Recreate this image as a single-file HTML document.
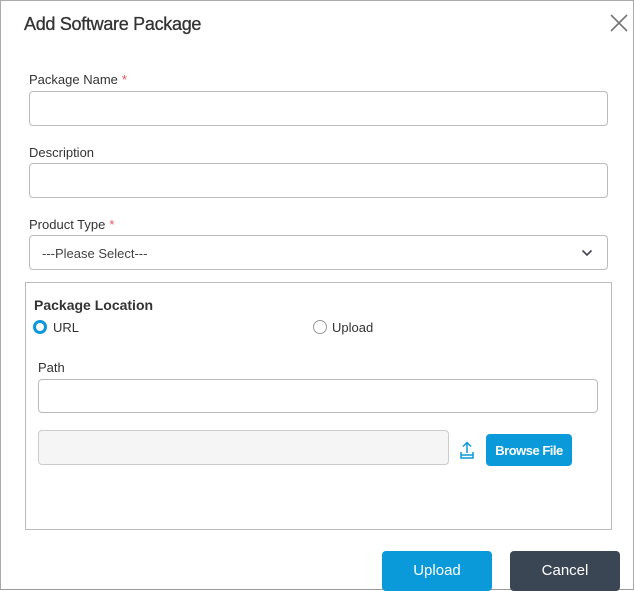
<!DOCTYPE html>
<html><head><meta charset="utf-8"><style>
*{box-sizing:border-box;margin:0;padding:0}
body{width:634px;height:590px;overflow:hidden;background:#fff;font-family:"Liberation Sans",sans-serif;color:#333;position:relative}
.frame{position:absolute;left:0;top:0;width:634px;height:590px;border:1px solid #aaa;border-bottom:1px solid #999}
.a{position:absolute}
.lbl{font-size:13px;color:#333}
.inp{position:absolute;border:1px solid #bbb;border-radius:4px;background:#fff}
.req{color:#e55;margin-left:4px}
.btn{position:absolute;border-radius:4px;color:#fff;font-size:15px;text-align:center}
</style></head><body>
<div class="frame"></div>
<div class="a" style="left:24px;top:14px;font-size:18px;color:#333;letter-spacing:-0.3px;-webkit-text-stroke:0.3px #333">Add Software Package</div>
<svg class="a" style="left:610px;top:14px" width="18" height="18" viewBox="0 0 18 18"><path d="M1 1L17 17M17 1L1 17" stroke="#777" stroke-width="1.6"/></svg>

<div class="a lbl" style="left:29px;top:72px">Package Name<span class="req">*</span></div>
<div class="inp" style="left:29px;top:91px;width:579px;height:35px"></div>
<div class="a lbl" style="left:29px;top:145px">Description</div>
<div class="inp" style="left:29px;top:163px;width:579px;height:35px"></div>
<div class="a lbl" style="left:29px;top:217px">Product Type<span class="req">*</span></div>
<div class="inp" style="left:29px;top:235px;width:579px;height:35px"></div>
<div class="a" style="left:42px;top:246px;font-size:13px;color:#444">---Please Select---</div>
<svg class="a" style="left:581px;top:249px" width="12" height="8" viewBox="0 0 12 8"><path d="M1.5 1.5L6 6L10.5 1.5" stroke="#445" stroke-width="1.6" fill="none"/></svg>

<div class="a" style="left:25px;top:282px;width:587px;height:248px;border:1px solid #bbb"></div>
<div class="a" style="left:34px;top:297px;font-size:14px;font-weight:bold;color:#333">Package Location</div>
<div class="a" style="left:33px;top:320px;width:14px;height:14px;border-radius:50%;border:3.5px solid #0a9ad9;background:#fff"></div>
<div class="a" style="left:53px;top:320px;font-size:13px">URL</div>
<div class="a" style="left:313px;top:320px;width:14px;height:14px;border-radius:50%;border:1px solid #999;background:#fff"></div>
<div class="a" style="left:332px;top:320px;font-size:13px">Upload</div>
<div class="a lbl" style="left:38px;top:360px">Path</div>
<div class="inp" style="left:38px;top:379px;width:560px;height:34px"></div>
<div class="inp" style="left:38px;top:430px;width:411px;height:35px;background:#f5f5f5;border-color:#ccc"></div>
<svg class="a" style="left:459px;top:441px" width="16" height="18" viewBox="0 0 16 18"><path d="M8 12V2M4 5.5L8 1.5L12 5.5M2 11v6h12v-6M2 14h12" stroke="#0a9ad9" stroke-width="1.5" fill="none"/></svg>
<div class="btn" style="left:486px;top:434px;width:86px;height:32px;background:#0a9ad9;font-size:13px;font-weight:bold;line-height:33px;letter-spacing:-0.5px">Browse File</div>

<div class="btn" style="left:382px;top:551px;width:110px;height:40px;background:#0a9ad9;line-height:40px">Upload</div>
<div class="btn" style="left:510px;top:551px;width:110px;height:40px;background:#3a4654;line-height:40px">Cancel</div>
</body></html>
